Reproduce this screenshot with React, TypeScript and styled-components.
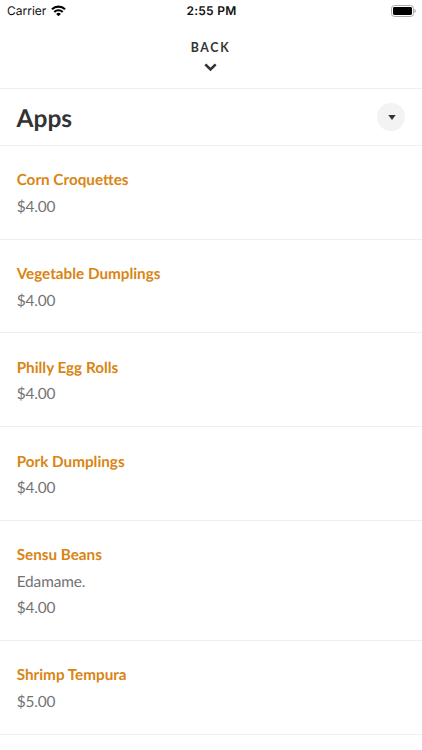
import React from "react";
import styled, { createGlobalStyle } from "styled-components";

const GlobalStyle = createGlobalStyle`
  *, *::before, *::after { box-sizing: border-box; }
  body { margin: 0; background: #fff; font-family: Lato, "Open Sans", sans-serif; text-rendering: geometricPrecision; }
`;

const Screen = styled.main`
  display: flex;
  flex-direction: column;
  height: 750px;
  overflow: hidden;
  background: #fff;
`;

const StatusBar = styled.header`
  display: grid;
  grid-template-columns: 1fr auto 1fr;
  align-items: center;
  height: 22px;
  padding: 0 6px 0 7px;
  color: #111;
  font-family: Inter, sans-serif;
  font-size: 12px;
  line-height: 22px;
`;

const Carrier = styled.div`
  display: flex;
  align-items: center;
  gap: 5px;
`;

const Clock = styled.div`
  font-weight: 600;
  letter-spacing: 0.25px;
`;

const BatteryIcon = styled.svg`
  justify-self: end;
  margin-bottom: 1px;
`;

const BackButton = styled.button`
  display: flex;
  flex-direction: column;
  align-items: center;
  gap: 7px;
  height: 67px;
  flex: none;
  padding: 17px 1px 0 0;
  border: 0;
  border-bottom: 1px solid #efefef;
  background: none;
  color: #333;
  font-family: inherit;
  font-size: 12.3px;
  font-weight: 700;
  line-height: 17px;
  letter-spacing: 1.7px;
`;

const SectionHeader = styled.div`
  display: flex;
  align-items: center;
  justify-content: space-between;
  height: 57px;
  flex: none;
  padding: 0 17px 0 16.5px;
  border-bottom: 1px solid #efefef;
`;

const SectionTitle = styled.h1`
  margin: 0;
  padding-top: 3px;
  color: #333;
  font-size: 24.5px;
  font-weight: 700;
  line-height: 32px;
`;

const ToggleButton = styled.button`
  display: flex;
  align-items: center;
  justify-content: center;
  width: 28px;
  height: 28px;
  padding: 1px 0 0 1px;
  border: 0;
  border-radius: 50%;
  background: #f3f3f3;
`;

const Menu = styled.ul`
  margin: 0;
  padding: 0;
  list-style: none;
`;

const MenuItem = styled.li`
  padding: 21.4px 16.7px 18.5px;
  border-bottom: 1px solid #efefef;
`;

const ItemName = styled.h2`
  margin: 0;
  color: #d98513;
  font-size: 15.25px;
  font-weight: 700;
  line-height: 26.4px;
`;

const ItemText = styled.p`
  margin: 0;
  color: #737373;
  font-size: 15.4px;
  letter-spacing: -0.13px;
  line-height: 26.4px;
`;

type Dish = { name: string; price: string; description?: string };

const dishes: Dish[] = [
  { name: "Corn Croquettes", price: "$4.00" },
  { name: "Vegetable Dumplings", price: "$4.00" },
  { name: "Philly Egg Rolls", price: "$4.00" },
  { name: "Pork Dumplings", price: "$4.00" },
  { name: "Sensu Beans", description: "Edamame.", price: "$4.00" },
  { name: "Shrimp Tempura", price: "$5.00" },
];

export default function App() {
  return (
    <Screen>
      <GlobalStyle />
      <StatusBar>
        <Carrier>
          Carrier
          <svg width="15" height="12" viewBox="0 0 16 12" fill="none" stroke="#000" strokeWidth="2.2">
            <path d="M1 4.2a10 10 0 0 1 14 0M3.5 7a6.4 6.4 0 0 1 9 0" />
            <path d="M8 11.7 5.5 9.2a3.5 3.5 0 0 1 5 0Z" fill="#000" stroke="none" />
          </svg>
        </Carrier>
        <Clock>2:55 PM</Clock>
        <BatteryIcon width="25" height="12" viewBox="0 0 25 12">
          <rect x="0.5" y="0.5" width="22" height="11" rx="3" fill="none" stroke="#aaa" />
          <rect x="2" y="2" width="19" height="8" rx="1.4" />
          <path d="M23.5 4v4c1.6-.7 1.6-3.3 0-4Z" fill="#999" />
        </BatteryIcon>
      </StatusBar>
      <BackButton>
        BACK
        <svg width="13" height="9" viewBox="0 0 13 9" fill="none" stroke="#333" strokeWidth="2.6">
          <path d="m1.3 1.3 5.2 5.2 5.2-5.2" />
        </svg>
      </BackButton>
      <SectionHeader>
        <SectionTitle>Apps</SectionTitle>
        <ToggleButton aria-label="Collapse Apps">
          <svg width="8" height="5" viewBox="0 0 8 5"><path d="M.3 0h7.4L4 5Z" fill="#333" /></svg>
        </ToggleButton>
      </SectionHeader>
      <Menu>
        {dishes.map((dish) => (
          <MenuItem key={dish.name}>
            <ItemName>{dish.name}</ItemName>
            {dish.description && <ItemText>{dish.description}</ItemText>}
            <ItemText>{dish.price}</ItemText>
          </MenuItem>
        ))}
      </Menu>
    </Screen>
  );
}
